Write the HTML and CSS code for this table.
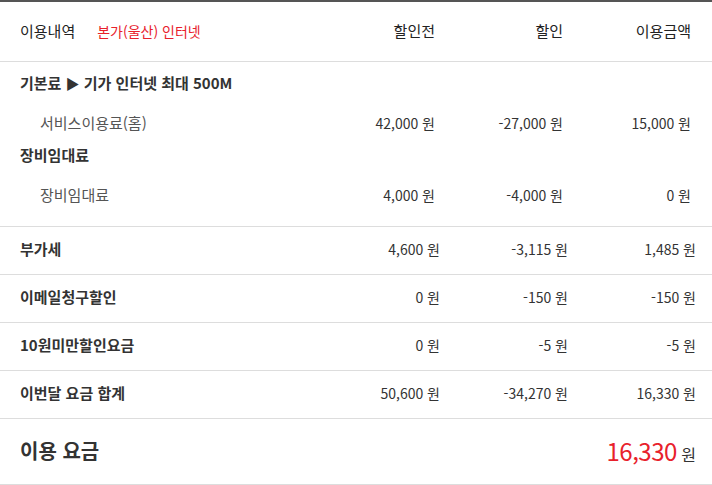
FILE: index.html
```html
<!DOCTYPE html>
<html lang="ko">
<head>
	<meta charset="UTF-8">
	<title>이용내역</title>
	<link rel="stylesheet" href="styles.css">
</head>
<body>
	<div class="bill">
		<div class="row head">
			<div class="label">이용내역<span class="product">본가(울산) 인터넷</span></div>
			<div class="num">할인전</div>
			<div class="num">할인</div>
			<div class="num">이용금액</div>
		</div>
		<div class="group">
			<div class="title">기본료 <span class="arrow">▶</span> 기가 인터넷 최대 500M</div>
			<div class="row sub">
				<div class="label">서비스이용료(홈)</div>
				<div class="num">42,000 원</div>
				<div class="num">-27,000 원</div>
				<div class="num">15,000 원</div>
			</div>
			<div class="title">장비임대료</div>
			<div class="row sub">
				<div class="label">장비임대료</div>
				<div class="num">4,000 원</div>
				<div class="num">-4,000 원</div>
				<div class="num">0 원</div>
			</div>
		</div>
		<div class="row line">
			<div class="label">부가세</div>
			<div class="num">4,600 원</div>
			<div class="num">-3,115 원</div>
			<div class="num">1,485 원</div>
		</div>
		<div class="row line">
			<div class="label">이메일청구할인</div>
			<div class="num">0 원</div>
			<div class="num">-150 원</div>
			<div class="num">-150 원</div>
		</div>
		<div class="row line">
			<div class="label">10원미만할인요금</div>
			<div class="num">0 원</div>
			<div class="num">-5 원</div>
			<div class="num">-5 원</div>
		</div>
		<div class="row line">
			<div class="label">이번달 요금 합계</div>
			<div class="num">50,600 원</div>
			<div class="num">-34,270 원</div>
			<div class="num">16,330 원</div>
		</div>
		<div class="total">
			<div class="total-label">이용 요금</div>
			<div class="total-sum"><span class="red">16,330</span> 원</div>
		</div>
	</div>
</body>
</html>
```
FILE: styles.css
```css
*{
	margin: 0px;
	padding: 0px;
	box-sizing: border-box;
}
body{
	font-family: "Noto Sans CJK KR", "Noto Sans", sans-serif;
	color: #333;
	background: #fff;
}
.bill{
	width: 712px;
	border-top: 2px solid #555;
}
.row{
	display: grid;
	grid-template-columns: 1fr 128px 128px 128px;
	align-items: center;
	padding: 0 16px 0 20px;
}
.num{
	text-align: right;
	font-size: 14px;
}
.head{
	height: 60px;
	padding-right: 21px;
	padding-bottom: 3px;
	border-bottom: 1px solid #ddd;
}
.head .label,
.head .num{
	font-size: 15px;
	color: #222;
}
.product{
	color: #e8212b;
	font-size: 14px;
	margin-left: 22px;
}
.group{
	padding: 9px 0 11px;
	border-bottom: 1px solid #ddd;
}
.title{
	padding-left: 20px;
	height: 24px;
	line-height: 24px;
	font-size: 15px;
	font-weight: bold;
}
.arrow{
	font-size: 14px;
}
.group .row{
	padding-right: 21px;
}
.sub{
	padding-top: 16px;
	padding-bottom: 8px;
	line-height: 24px;
}
.sub .label{
	padding-left: 20px;
	font-size: 15px;
	color: #555;
}
.line{
	height: 48px;
	padding-bottom: 4px;
	border-bottom: 1px solid #ddd;
}
.line .label{
	font-size: 15px;
	font-weight: bold;
}
.total{
	display: flex;
	justify-content: space-between;
	align-items: center;
	height: 66px;
	padding: 0 16px 2px 20px;
	border-bottom: 1px solid #ddd;
}
.total-label{
	font-size: 20px;
	font-weight: bold;
}
.total-sum{
	font-size: 16px;
}
.red{
	color: #e8212b;
	font-size: 24px;
	letter-spacing: -0.5px;
}
```
